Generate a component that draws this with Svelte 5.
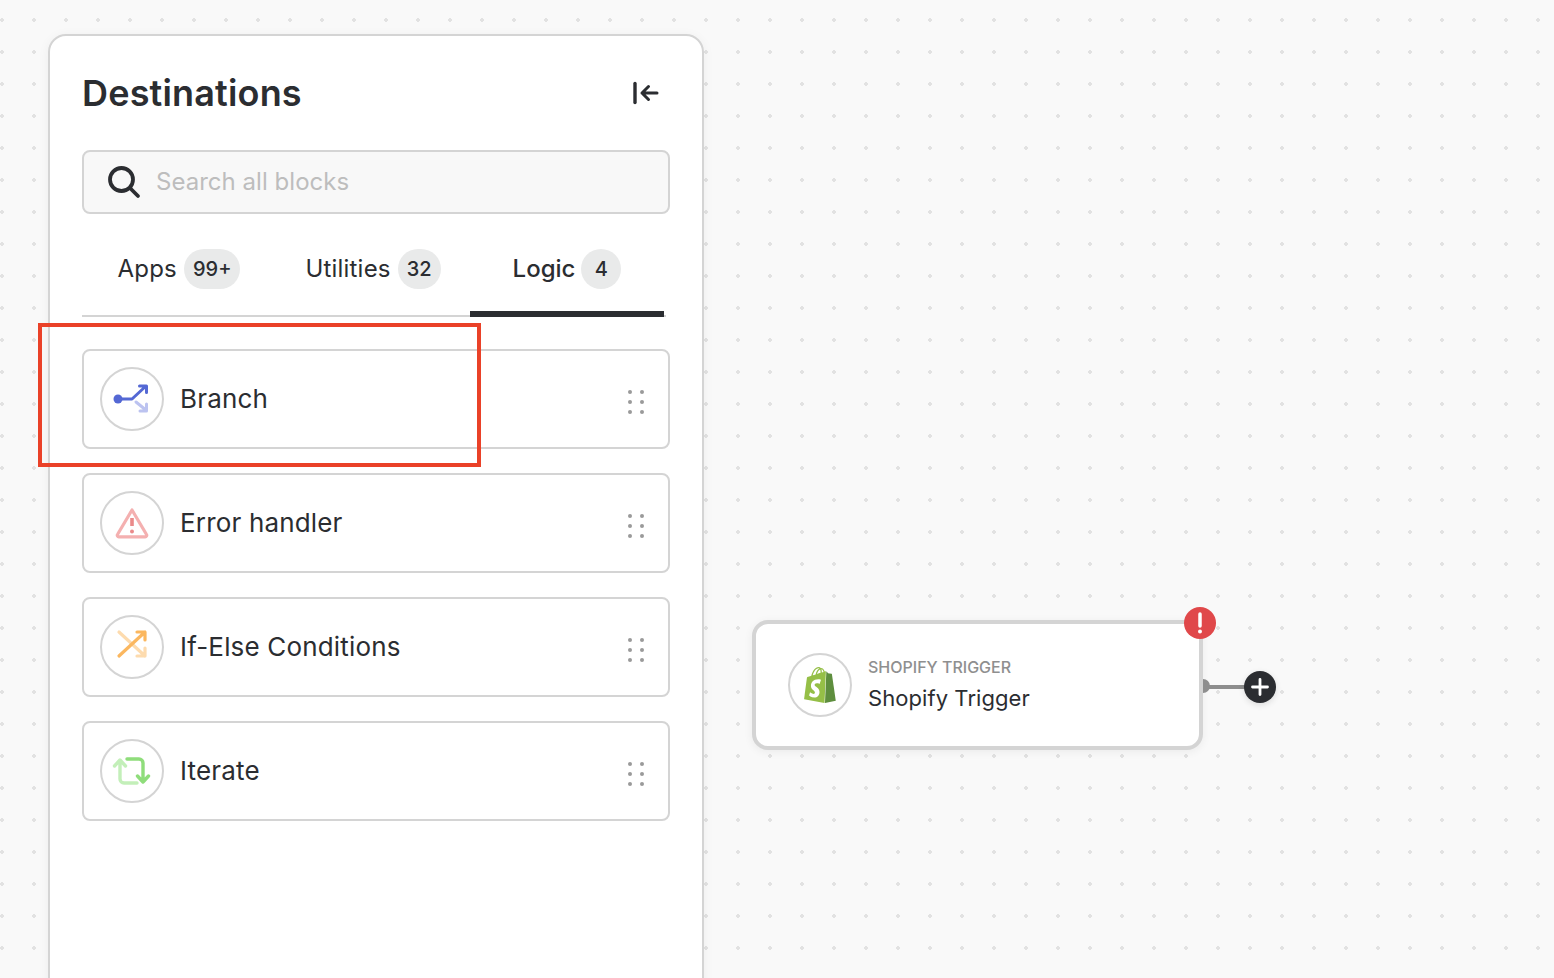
<script lang="ts">
	const tabs = [
		{ label: 'Apps', count: '99+' },
		{ label: 'Utilities', count: '32' },
		{ label: 'Logic', count: '4', active: true }
	];
	const blocks = ['branch', 'error', 'ifelse', 'iterate'];
	const names: Record<string, string> = {
		branch: 'Branch',
		error: 'Error handler',
		ifelse: 'If-Else Conditions',
		iterate: 'Iterate'
	};
</script>

<div class="canvas">
	<aside class="panel">
		<header class="panel-head">
			<h1>Destinations</h1>
			<svg class="collapse" viewBox="0 0 28 24" width="28" height="24" fill="none" stroke="#2b2d31" stroke-linecap="round" stroke-linejoin="round">
				<path d="M3 2.500v19" stroke-width="3.400" />
				<path d="M25 12H10M16.500 5.500 10 12 16.500 18.500" stroke-width="3" />
			</svg>
		</header>

		<div class="search">
			<svg viewBox="0 0 36 36" width="36" height="36" fill="none" stroke="#2b2d31" stroke-width="3.800" stroke-linecap="round">
				<circle cx="15.500" cy="15.500" r="11.500" />
				<path d="M24.500 24.500 32 32" />
			</svg>
			<span>Search all blocks</span>
		</div>

		<nav class="tabs">
			{#each tabs as tab}
				<div class="tab" class:active={tab.active}>
					<span>{tab.label}</span>
					<b>{tab.count}</b>
				</div>
			{/each}
		</nav>

		<ul class="blocks">
			{#each blocks as id}
				<li class="block">
					<span class="circle">
						<svg viewBox="0 0 40 40" width="40" height="40" fill="none" stroke-width="3" stroke-linecap="round" stroke-linejoin="round">
							{#if id === 'branch'}
								<path d="M24 23 34.500 31.500M34.500 25v7H28" stroke="#bcc3f0" />
								<circle cx="6" cy="20" r="4.500" fill="#5468d4" stroke="none" />
								<path d="M6 20h14L34 7M27.500 7H34.500V13.500" stroke="#5468d4" />
							{:else if id === 'error'}
								<path d="M20 7 34.500 31.500a1.500 1.500 0 0 1-1.300 2.300H6.800A1.500 1.500 0 0 1 5.500 31.500Z" stroke="#f4b0b0" stroke-width="3.200" />
								<path d="M20 15v8" stroke="#ea8a8a" stroke-width="3.600" stroke-linecap="butt" />
								<circle cx="20" cy="28.500" r="2" fill="#ea8a8a" stroke="none" />
							{:else if id === 'ifelse'}
								<path d="M7 5 33 29M33 21v8h-8" stroke="#fddbae" stroke-width="3.200" />
								<path d="M7 29 33 5M25 5h8v8" stroke="#fbb75f" stroke-width="3.200" />
							{:else}
								<path d="M25 32H12a4 4 0 0 1-4-4V10M2.500 15 8 9l5.500 6" stroke="#c3efb9" stroke-width="3.400" />
								<path d="M15 8h12a4 4 0 0 1 4 4v18M25.500 25 31 31l5.500-6" stroke="#8fdd7b" stroke-width="3.400" />
							{/if}
						</svg>
					</span>
					<span class="name">{names[id]}</span>
					<span class="grip">
						{#each Array(6) as _}<i></i>{/each}
					</span>
				</li>
			{/each}
		</ul>
	</aside>

	<div class="highlight"></div>

	<div class="node">
		<span class="circle">
			<svg viewBox="0 0 24 24" width="36" height="36">
				<path
					fill="#95bf47"
					d="M11.170.830c.136 0 .271.038.405.135-.984.465-2.064 1.639-2.508 3.992-.656.213-1.293.405-1.889.578C7.697 3.750 8.951.840 11.170.840V.830zm1.235 2.949v.135c-.754.232-1.583.484-2.394.736.466-1.777 1.333-2.645 2.085-2.971.193.501.309 1.176.309 2.100zm.539-2.234c.694.074 1.141.867 1.429 1.755-.349.114-.735.231-1.158.366v-.252c0-.752-.096-1.371-.271-1.871v.002zm2.992 1.289c-.020 0-.060.021-.078.021s-.289.075-.714.210c-.423-1.233-1.176-2.370-2.508-2.370h-.115C12.135.209 11.669 0 11.265 0 8.159 0 6.675 3.877 6.210 5.846c-1.194.365-2.063.636-2.160.674-.675.213-.694.232-.772.870-.075.462-1.830 14.063-1.830 14.063L15.009 24l.927-21.166zM11.710 11.305s-.810-.424-1.774-.424c-1.447 0-1.504.906-1.504 1.141 0 1.232 3.240 1.715 3.240 4.629 0 2.295-1.440 3.760-3.406 3.760-2.354 0-3.540-1.465-3.540-1.465l.646-2.086s1.245 1.066 2.280 1.066c.675 0 .975-.545.975-.932 0-1.619-2.654-1.694-2.654-4.359-.034-2.237 1.571-4.416 4.827-4.416 1.257 0 1.875.361 1.875.361l-.945 2.715-.020.010z"
				/>
				<path
					fill="#5e8e3e"
					d="M15.337 23.979l7.216-1.561s-2.604-17.613-2.625-17.730c-.018-.116-.114-.192-.211-.192s-1.929-.136-1.929-.136-1.275-1.274-1.439-1.411c-.045-.037-.075-.057-.121-.074l-.914 21.104h.023z"
				/>
			</svg>
		</span>
		<div class="node-text">
			<small>SHOPIFY TRIGGER</small>
			<strong>Shopify Trigger</strong>
		</div>

		<span class="alert">
			<svg viewBox="0 0 32 32" width="32" height="32" fill="none" stroke="#fff" stroke-linecap="round">
				<path d="M16 7v12" stroke-width="3.500" />
				<circle cx="16" cy="24.500" r="2" fill="#fff" stroke="none" />
			</svg>
		</span>
		<span class="port"></span>
		<span class="wire"></span>
		<span class="add">
			<svg viewBox="0 0 32 32" width="32" height="32" fill="none" stroke="#fff" stroke-width="2.800" stroke-linecap="round">
				<path d="M16 8.500v15M8.500 16h15" />
			</svg>
		</span>
	</div>
</div>

<style>
	:global(body) {
		margin: 0;
		font-family: Inter, 'Liberation Sans', sans-serif;
		color: #2b2d31;
	}

	.canvas {
		position: relative;
		height: 100vh;
		min-height: 978px;
		overflow: hidden;
		box-sizing: border-box;
		padding: 34px 0 0 48px;
		background-color: #f9f9f9;
		background-image: radial-gradient(circle at 16px 16px, #e2e2e2 1.600px, transparent 2px);
		background-size: 32px 32px;
		background-position: -14px 4px;
	}

	.panel {
		box-sizing: border-box;
		width: 656px;
		height: 1000px;
		padding: 32px 32px 0;
		background: #fff;
		border: 2px solid #d4d4d4;
		border-radius: 18px;
		box-shadow: 0 2px 12px rgba(0, 0, 0, 0.05);
	}

	.panel-head {
		display: flex;
		align-items: center;
		justify-content: space-between;
		height: 50px;
	}

	h1 {
		margin: 0;
		font-size: 36px;
		font-weight: 600;
		letter-spacing: 0.17px;
	}

	.collapse {
		margin-right: 10px;
	}

	.search {
		display: flex;
		align-items: center;
		gap: 14px;
		box-sizing: border-box;
		height: 64px;
		margin-top: 32px;
		padding-left: 22px;
		background: #f8f8f8;
		border: 2px solid #d4d4d4;
		border-radius: 8px;
		font-size: 24px;
		line-height: 26px;
		color: #bdbdbd;
	}

	.search span {
		margin-top: -1px;
		letter-spacing: 0.03px;
	}

	.tabs {
		display: flex;
		width: 584px;
		height: 79px;
		margin-top: 24px;
		box-shadow: inset 0 -2px 0 #d4d4d4;
	}

	.tab {
		box-sizing: border-box;
		display: flex;
		justify-content: center;
		align-items: flex-start;
		gap: 7px;
		width: 194px;
		padding-top: 11px;
		font-size: 24px;
		line-height: 40px;
		letter-spacing: 0.2px;
	}

	.tab.active {
		gap: 6px;
		border-bottom: 6px solid #2b2d31;
		font-weight: 500;
		letter-spacing: 0;
	}

	.tab b {
		min-width: 40px;
		box-sizing: border-box;
		padding: 0 9px;
		height: 40px;
		border-radius: 20px;
		background: #e9eaea;
		font-size: 20px;
		font-weight: 500;
		letter-spacing: 0;
		text-align: center;
	}

	.blocks {
		display: flex;
		flex-direction: column;
		gap: 24px;
		margin: 32px 0 0;
		padding: 0;
		list-style: none;
	}

	.block {
		display: flex;
		align-items: center;
		box-sizing: border-box;
		height: 100px;
		padding: 0 24px 0 16px;
		border: 2px solid #d4d4d4;
		border-radius: 8px;
	}

	.circle {
		flex: none;
		display: flex;
		align-items: center;
		justify-content: center;
		box-sizing: border-box;
		width: 64px;
		height: 64px;
		border: 2px solid #d4d4d4;
		border-radius: 50%;
		background: #fff;
	}

	.name {
		flex: 1;
		margin-left: 16px;
		margin-top: -2px;
		font-size: 26px;
		letter-spacing: 0.17px;
	}

	.grip {
		display: grid;
		grid-template-columns: 4px 4px;
		grid-auto-rows: 4px;
		column-gap: 8px;
		row-gap: 6px;
		margin-top: 6px;
	}

	.grip i {
		border-radius: 50%;
		background: #9a9a9a;
	}

	.highlight {
		position: absolute;
		left: 38px;
		top: 323px;
		width: 443px;
		height: 144px;
		box-sizing: border-box;
		border: 4px solid #ea4128;
	}

	.node {
		position: absolute;
		left: 752px;
		top: 620px;
		display: flex;
		align-items: center;
		gap: 16px;
		box-sizing: border-box;
		width: 451px;
		height: 130px;
		padding: 0 0 0 32px;
		background: #fff;
		border: 4px solid #d4d4d4;
		border-radius: 16px;
		box-shadow: 0 2px 10px rgba(0, 0, 0, 0.06);
	}

	.node-text {
		display: flex;
		flex-direction: column;
		gap: 8px;
		margin-top: -2px;
	}

	.node-text small {
		font-size: 16px;
		font-weight: 500;
		color: #8f8f8f;
	}

	.node-text strong {
		font-size: 22px;
		font-weight: 400;
		letter-spacing: 0.07px;
	}

	.alert {
		position: absolute;
		left: 428px;
		top: -17px;
		width: 32px;
		height: 32px;
		border-radius: 50%;
		background: #e0484a;
	}

	.port {
		position: absolute;
		left: 447px;
		top: 55px;
		width: 14px;
		height: 14px;
		margin-left: -7px;
		border-radius: 50%;
		background: #8e8e8e;
		clip-path: inset(0 0 0 7px);
	}

	.wire {
		position: absolute;
		left: 452px;
		top: 61px;
		width: 38px;
		height: 4px;
		background: #8e8e8e;
	}

	.add {
		position: absolute;
		left: 488px;
		top: 47px;
		width: 32px;
		height: 32px;
		border-radius: 50%;
		background: #2b2d31;
		box-shadow: 0 2px 6px rgba(0, 0, 0, 0.12);
	}

	.alert svg,
	.add svg {
		display: block;
	}
</style>
